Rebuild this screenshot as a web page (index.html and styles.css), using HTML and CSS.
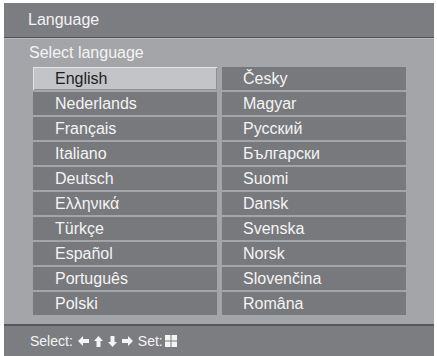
FILE: index.html
```html
<!DOCTYPE html>
<html lang="en">
<head>
    <meta charset="UTF-8">
    <meta name="viewport" content="width=device-width, initial-scale=1.0">
    <title>Language</title>
    <link rel="stylesheet" href="styles.css">
</head>
<body>
    <div class="screen">
        <div class="title-bar">Language</div>
        <div class="panel">
            <div class="panel-label">Select language</div>
            <div class="lang-list">
                <div class="lang selected">English</div>
                <div class="lang">Česky</div>
                <div class="lang">Nederlands</div>
                <div class="lang">Magyar</div>
                <div class="lang">Français</div>
                <div class="lang">Русский</div>
                <div class="lang">Italiano</div>
                <div class="lang">Български</div>
                <div class="lang">Deutsch</div>
                <div class="lang">Suomi</div>
                <div class="lang">Ελληνικά</div>
                <div class="lang">Dansk</div>
                <div class="lang">Türkçe</div>
                <div class="lang">Svenska</div>
                <div class="lang">Español</div>
                <div class="lang">Norsk</div>
                <div class="lang">Português</div>
                <div class="lang">Slovenčina</div>
                <div class="lang">Polski</div>
                <div class="lang">Româna</div>
            </div>
        </div>
        <div class="footer">
            <span class="hint">Select:</span>
            <!-- left / up / down / right -->
            <svg class="arrow" width="11" height="10" viewBox="0 0 11 10"><path d="M0 5 L5 0 L5 3 L11 3 L11 7 L5 7 L5 10 Z" fill="#f4f4f4"/></svg>
            <svg class="arrow" width="9" height="11" viewBox="0 0 9 11"><path d="M4.5 0 L9 5 L6.5 5 L6.5 11 L2.5 11 L2.5 5 L0 5 Z" fill="#f4f4f4"/></svg>
            <svg class="arrow" width="9" height="11" viewBox="0 0 9 11"><path d="M4.5 11 L9 6 L6.5 6 L6.5 0 L2.5 0 L2.5 6 L0 6 Z" fill="#f4f4f4"/></svg>
            <svg class="arrow" width="11" height="10" viewBox="0 0 11 10"><path d="M11 5 L6 0 L6 3 L0 3 L0 7 L6 7 L6 10 Z" fill="#f4f4f4"/></svg>
            <span class="hint set">Set:</span>
            <svg class="set-icon" width="12" height="12" viewBox="0 0 12 12"><rect width="12" height="12" fill="#f4f4f4"/><rect x="5.5" y="0" width="1" height="12" fill="#7b7c80"/><rect x="0" y="5.5" width="12" height="1" fill="#7b7c80"/></svg>
        </div>
    </div>
</body>
</html>
```

FILE: styles.css
```css
body {
    margin: 0;
    background-color: #fff;
    font-family: "Liberation Sans", Arial, sans-serif;
}
.screen {
    width: 430px;
    height: 353px;
    margin: 3px 0 0 4px;
    display: flex;
    flex-direction: column;
    background-color: #a4a5a9;
}
.title-bar {
    height: 35px;
    box-sizing: border-box;
    padding: 8px 0 0 24px;
    background-color: #7c7d81;
    border-bottom: 1px solid #4f5053;
    color: #f4f4f4;
    font-size: 16px;
}
.panel {
    flex: 1;
    padding: 5px 0 0 25px;
    border-top: 1px solid #b8b9bc;
}
.panel-label {
    color: #f4f4f4;
    font-size: 16px;
    line-height: 18px;
    height: 23px;
}
.lang-list {
    display: grid;
    grid-template-columns: 184px 184px;
    grid-auto-rows: 23px;
    gap: 2px 5px;
    margin-left: 4px;
}
.lang {
    background-color: #78797d;
    color: #f4f4f4;
    font-size: 16px;
    line-height: 24px;
    padding-left: 22px;
}
.lang:nth-child(even) {
    padding-left: 21px;
}
.lang.selected {
    background-color: #c3c4c7;
    color: #1e1e1e;
    box-shadow: inset 1px 1px 0 #e2e3e5, inset -1px -1px 0 #8f9094;
}
.footer {
    height: 30px;
    display: flex;
    align-items: center;
    gap: 5px;
    padding-left: 26px;
    background-color: #7c7d81;
    border-top: 2px solid #58595c;
    color: #f4f4f4;
    font-size: 14px;
}
.set-icon {
    margin-left: -3px;
}
```
